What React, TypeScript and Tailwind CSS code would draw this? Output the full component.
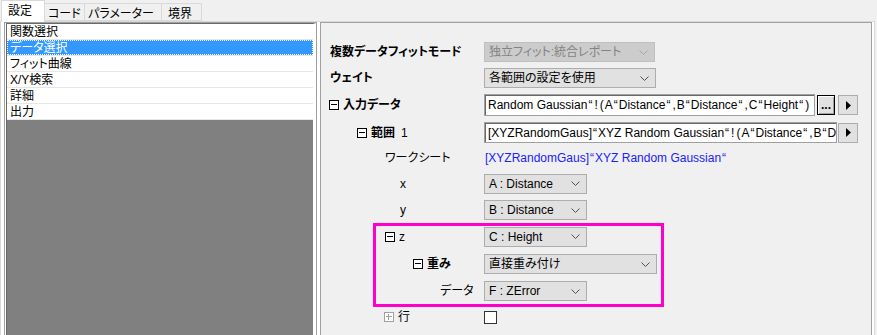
import React from 'react';

const font = "font-['Liberation_Sans','Noto_Sans_CJK_JP',sans-serif] [font-feature-settings:'palt']";

// MS UI Gothic draws quotes and brackets a bit wider than Arial
function Spaced({ text }: { text: string }) {
  return (
    <>
      {text.split(/([“!(),])/).map((part, i) =>
        /^[“!(),]$/.test(part) ? (
          <span key={i} className="px-[1px]">
            {part}
          </span>
        ) : (
          part
        )
      )}
    </>
  );
}

function Chevron({ muted }: { muted?: boolean }) {
  return (
    <svg width="9" height="5" viewBox="0 0 9 5" className="shrink-0">
      <polyline points="0.5,0.5 4.5,4.5 8.5,0.5" fill="none" stroke={muted ? '#a6a6a6' : '#505050'} strokeWidth="1" />
    </svg>
  );
}

function Toggle({ muted }: { muted?: boolean }) {
  const c = muted ? '#a0a0a0' : '#000000';
  return (
    <svg width="10" height="10" viewBox="0 0 10 10" className="shrink-0">
      <rect x="0.5" y="0.5" width="9" height="9" fill="white" stroke={c} />
      <line x1="2" y1="4.5" x2="8" y2="4.5" stroke={c} />
      {muted && <line x1="4.5" y1="2" x2="4.5" y2="8" stroke={c} />}
    </svg>
  );
}

function Combo({ text, className, muted }: { text: string; className: string; muted?: boolean }) {
  return (
    <div
      className={`flex h-[20px] items-center justify-between border pl-[4px] pr-[6px] ${className} ${
        muted ? 'border-[#bfbfbf] bg-[#cccccc] text-[#838383]' : 'border-[#adadad] bg-[#e1e1e1] text-black'
      }`}
    >
      <span className="whitespace-nowrap">{text}</span>
      <Chevron muted={muted} />
    </div>
  );
}

function ArrowButton() {
  return (
    <div className="flex h-[20px] w-[20px] items-center justify-center border border-[#adadad] bg-[#e1e1e1]">
      <svg width="5" height="9" viewBox="0 0 5 9">
        <polygon points="0,0 5,4.5 0,9" fill="black" />
      </svg>
    </div>
  );
}

function Row({ h, pl, children, value }: { h: string; pl: string; children?: React.ReactNode; value?: React.ReactNode }) {
  return (
    <div className={`flex items-center ${h}`}>
      <div className={`flex w-[163px] shrink-0 items-center gap-[4px] ${pl}`}>{children}</div>
      <div className="flex items-center">{value}</div>
    </div>
  );
}

const items = ['関数選択', 'データ選択', 'フィット曲線', 'X/Y検索', '詳細', '出力'];

export default function App() {
  return (
    <div className={`h-[335px] w-[877px] overflow-hidden bg-[#f0f0f0] text-[12px] leading-none text-black ${font}`}>
      <div className="relative z-10 flex h-[21px] items-end pl-[1px]">
        <div className="-mb-px h-[22px] w-[44px] border border-b-0 border-[#d9d9d9] bg-white pl-[6px] pt-[4px]">設定</div>
        <div className="h-[18px] w-[40px] border-y border-r border-[#d9d9d9] pl-[3px] pt-[4px]">コード</div>
        <div className="h-[18px] w-[77px] border-y border-r border-[#d9d9d9] pl-[3px] pt-[4px]">パラメーター</div>
        <div className="h-[18px] w-[40px] border-y border-r border-[#d9d9d9] pl-[6px] pt-[4px]">境界</div>
      </div>

      <div className="flex h-[314px] w-[875px] border-x border-t border-[#d9d9d9] bg-white pl-[3px] pr-[2px]">
        <div className="flex w-[313px] flex-col border-l border-r border-t border-[#a0a0a0] pl-px">
          <div className="flex flex-1 flex-col border-l border-t border-r-[3px] border-[#696969] border-r-white bg-[#808080]">
            {items.map((label, i) => (
              <div key={label} className="h-[16px] border-b border-[#e6e6e6] bg-white">
                {i === 1 ? (
                  <div className="flex h-full items-center border border-dotted border-white bg-[#3399ff] pl-[2px] text-white">
                    {label}
                  </div>
                ) : (
                  <div className="flex h-full items-center pl-[3px]">{label}</div>
                )}
              </div>
            ))}
          </div>
        </div>

        <div className="w-[3px]" />

        <div className="flex w-[552px] flex-col border-l border-r border-t border-[#a0a0a0] bg-[#f0f0f0] pt-[16px]">
          <Row h="h-[26px]" pl="pl-[9px]" value={<Combo muted text="独立フィット:統合レポート" className="w-[171px]" />}>
            <span className="font-bold">複数データフィットモード</span>
          </Row>
          <Row h="h-[26px]" pl="pl-[9px]" value={<Combo text="各範囲の設定を使用" className="w-[172px]" />}>
            <span className="font-bold">ウェイト</span>
          </Row>
          <Row
            h="h-[28px]"
            pl="pl-[8px]"
            value={
              <>
                <div className="flex h-[22px] w-[331px] items-center overflow-hidden whitespace-nowrap border border-[#a0a0a0] bg-white pl-[3px] shadow-[inset_1px_1px_0_#696969]">
                  <Spaced text="Random Gaussian“!(A“Distance“,B“Distance“,C“Height“)" />
                </div>
                <div className="ml-[2px] flex h-[20px] w-[18px] items-end justify-center border border-black bg-[#e1e1e1] pb-[3px] shadow-[inset_1px_1px_0_#ffffff,inset_-1px_-1px_0_#a0a0a0] font-bold">
                  ...
                </div>
                <div className="ml-[3px]">
                  <ArrowButton />
                </div>
              </>
            }
          >
            <Toggle />
            <span className="font-bold">入力データ</span>
          </Row>
          <Row
            h="h-[27px]"
            pl="pl-[36px]"
            value={
              <>
                <div className="flex h-[21px] w-[353px] items-center overflow-hidden whitespace-nowrap border border-[#a0a0a0] bg-white pl-[3px] shadow-[inset_1px_1px_0_#696969]">
                  <Spaced text="[XYZRandomGaus]“XYZ Random Gaussian“!(A“Distance“,B“D" />
                </div>
                <div className="ml-px">
                  <ArrowButton />
                </div>
              </>
            }
          >
            <Toggle />
            <span className="font-bold">範囲</span>
            <span className="ml-[2px]">1</span>
          </Row>
          <Row
            h="h-[24px]"
            pl="pl-[64px]"
            value={
              <span className="pl-px text-[#2020ff]">
                <Spaced text="[XYZRandomGaus]“XYZ Random Gaussian“" />
              </span>
            }
          >
            <span>ワークシート</span>
          </Row>
          <Row h="h-[27px]" pl="pl-[79px]" value={<Combo text="A : Distance" className="w-[103px]" />}>
            <span>x</span>
          </Row>
          <Row h="h-[26px]" pl="pl-[79px]" value={<Combo text="B : Distance" className="w-[103px]" />}>
            <span>y</span>
          </Row>

          <div className="relative">
            <Row h="h-[27px]" pl="pl-[64px]" value={<Combo text="C : Height" className="w-[103px]" />}>
              <Toggle />
              <span>z</span>
            </Row>
            <Row h="h-[28px]" pl="pl-[92px]" value={<Combo text="直接重み付け" className="w-[173px]" />}>
              <Toggle />
              <span className="font-bold">重み</span>
            </Row>
            <Row h="h-[26px]" pl="pl-[119px]" value={<Combo text="F : ZError" className="w-[103px]" />}>
              <span>データ</span>
            </Row>
            <div className="pointer-events-none absolute left-[52px] top-0 h-[84px] w-[291px] border-[3px] border-[#ff00cc]" />
          </div>

          <Row h="h-[26px]" pl="pl-[63px]" value={<div className="h-[13px] w-[13px] border border-[#333333] bg-white" />}>
            <Toggle muted />
            <span>行</span>
          </Row>
        </div>
      </div>
    </div>
  );
}
